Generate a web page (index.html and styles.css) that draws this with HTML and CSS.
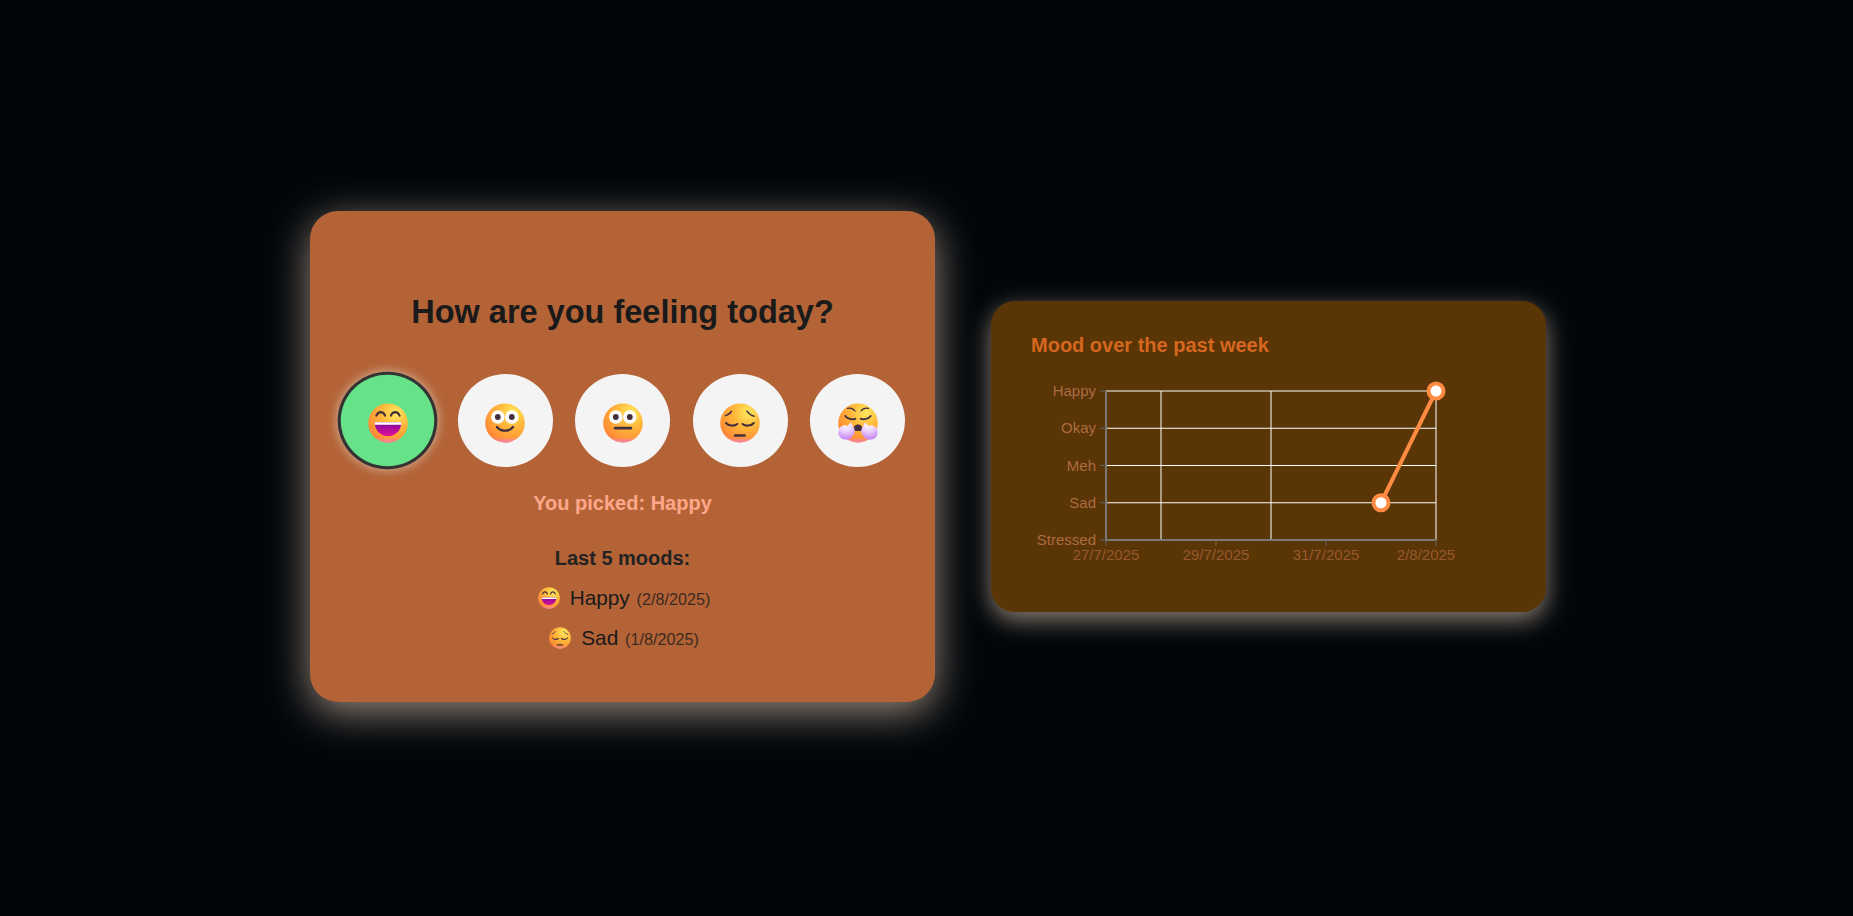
FILE: index.html
```html
<!DOCTYPE html>
<html lang="en">
<head>
<meta charset="utf-8">
<title>Mood tracker</title>
<link rel="stylesheet" href="styles.css">
</head>
<body>
<svg class="sprite" aria-hidden="true">
  <defs>
    <radialGradient id="faceBase" cx="0.7" cy="0.24" r="0.85">
      <stop offset="0" stop-color="#ffe95e"/>
      <stop offset="0.42" stop-color="#ffb93c"/>
      <stop offset="0.82" stop-color="#ff9434"/>
      <stop offset="1" stop-color="#f97e3a"/>
    </radialGradient>
    <linearGradient id="facePink" x1="0" y1="0" x2="0" y2="1">
      <stop offset="0.86" stop-color="#f98bb0" stop-opacity="0"/>
      <stop offset="1" stop-color="#f47fb4" stop-opacity="1"/>
    </linearGradient>
    <linearGradient id="mouthFill" x1="0" y1="0" x2="0" y2="1">
      <stop offset="0" stop-color="#7f0a9c"/>
      <stop offset="1" stop-color="#e4109a"/>
    </linearGradient>
    <radialGradient id="steamFill" cx="0.45" cy="0.08" r="0.95">
      <stop offset="0" stop-color="#fff"/>
      <stop offset="0.45" stop-color="#ecd2ff"/>
      <stop offset="1" stop-color="#c27cf0"/>
    </radialGradient>
    <symbol id="face" viewBox="0 0 40 40">
      <ellipse cx="20" cy="20" rx="19.8" ry="19.6" fill="url(#faceBase)"/>
      <ellipse cx="20" cy="20" rx="19.8" ry="19.6" fill="url(#facePink)"/>
    </symbol>
    <symbol id="emo-happy" viewBox="0 0 40 40">
      <use href="#face"/>
      <path d="M8.300 12.600c1-2.600 2.700-3.600 4.400-3.600s3.400 1 4.400 3.600M22.800 12.600c1-2.600 2.700-3.600 4.400-3.600s3.400 1 4.400 3.600" fill="none" stroke="#43303f" stroke-width="2.100" stroke-linecap="round"/>
      <path d="M7.400 19.200h25.200c.5 0 .8.400.7.900C32.800 27.800 27.300 33 20 33S7.200 27.800 6.700 20.100c-.1-.5.200-.900.700-.900z" fill="url(#mouthFill)"/>
      <path d="M7.400 19.200h25.200c.5 0 .8.400.7.900l-.2 1.500H6.900l-.2-1.500c-.1-.5.200-.900.700-.900z" fill="#fff"/>
    </symbol>
    <symbol id="emo-okay" viewBox="0 0 40 40">
      <use href="#face"/>
      <circle cx="12.800" cy="14" r="6.700" fill="#fff"/>
      <circle cx="26.800" cy="14" r="6.700" fill="#fff"/>
      <circle cx="12.800" cy="14" r="2.900" fill="#43303f"/>
      <circle cx="26.800" cy="14" r="2.900" fill="#43303f"/>
      <path d="M12 24c2 2.700 5 3.700 8 3.700s6-1 8-3.700" fill="none" stroke="#43303f" stroke-width="2.300" stroke-linecap="round"/>
    </symbol>
    <symbol id="emo-meh" viewBox="0 0 40 40">
      <use href="#face"/>
      <circle cx="12.800" cy="14" r="6.700" fill="#fff"/>
      <circle cx="26.800" cy="14" r="6.700" fill="#fff"/>
      <circle cx="12.800" cy="14" r="2.900" fill="#43303f"/>
      <circle cx="26.800" cy="14" r="2.900" fill="#43303f"/>
      <path d="M12.200 25.200h15.600" fill="none" stroke="#43303f" stroke-width="2.800" stroke-linecap="round"/>
    </symbol>
    <symbol id="emo-sad" viewBox="0 0 40 40">
      <use href="#face"/>
      <path d="M5.500 12.600c2.600-.7 4.800-2.200 6-4.400M34 13.200c-3-.9-5.500-2.600-7-5" fill="none" stroke="#43303f" stroke-width="1.500" stroke-linecap="round"/>
      <path d="M6 20c2.300 2.700 8 3.700 11.300 1M22.500 21c3.300 2.700 9 1.700 11.300-1" fill="none" stroke="#43303f" stroke-width="2.100" stroke-linecap="round"/>
      <path d="M15 32.400h9.600" fill="none" stroke="#43303f" stroke-width="2.500" stroke-linecap="round"/>
    </symbol>
    <symbol id="emo-stressed" viewBox="0 0 40 40">
      <use href="#face"/>
      <path d="M9.500 5.300c3-.7 5.800.2 7.500 2.700M30.500 5.300c-3-.7-5.800.2-7.500 2.700" fill="none" stroke="#43303f" stroke-width="1.300" stroke-linecap="round"/>
      <path d="M7.300 13c2 2.800 6.500 3.800 10 2.800M32.700 13c-2 2.800-6.500 3.800-10 2.800" fill="none" stroke="#43303f" stroke-width="1.900" stroke-linecap="round"/>
      <path d="M15 28c0-4.400 2.300-6.500 5-6.500s5 2.100 5 6.500z" fill="#43303f"/>
      <path d="M4 23c2-1.200 4-1 5.500.2C10.500 21.500 12 20 13 19.500l3.500 6.500c.8 2.300.2 4.800-1.800 7-1.700 2.600-5 4.300-8 3.600-3.500-.4-6-3-6.300-6.500C.1 27.200 1.500 24.500 4 23z" fill="url(#steamFill)"/>
      <path d="M36 23c-2-1.200-4-1-5.500.2-1-1.700-2.500-3.200-3.500-3.700l-3.500 6.500c-.8 2.300-.2 4.800 1.800 7 1.700 2.600 5 4.300 8 3.600 3.500-.4 6-3 6.300-6.500.3-2.900-1.100-5.600-3.600-7.100z" fill="url(#steamFill)"/>
    </symbol>
  </defs>
</svg>

<main class="page">
  <section class="card mood-card">
    <h1 class="mood-title">How are you feeling today?</h1>
    <div class="mood-row">
      <button class="mood-btn is-selected" type="button" aria-label="Happy"><svg class="mood-emoji"><use href="#emo-happy"/></svg></button>
      <button class="mood-btn" type="button" aria-label="Okay"><svg class="mood-emoji"><use href="#emo-okay"/></svg></button>
      <button class="mood-btn" type="button" aria-label="Meh"><svg class="mood-emoji"><use href="#emo-meh"/></svg></button>
      <button class="mood-btn" type="button" aria-label="Sad"><svg class="mood-emoji"><use href="#emo-sad"/></svg></button>
      <button class="mood-btn" type="button" aria-label="Stressed"><svg class="mood-emoji"><use href="#emo-stressed"/></svg></button>
    </div>
    <p class="picked">You picked: Happy</p>
    <h2 class="history-title">Last 5 moods:</h2>
    <ul class="history">
      <li class="history-item"><svg class="history-emoji"><use href="#emo-happy"/></svg><span class="history-text">Happy <small class="history-date">(2/8/2025)</small></span></li>
      <li class="history-item"><svg class="history-emoji"><use href="#emo-sad"/></svg><span class="history-text">Sad <small class="history-date">(1/8/2025)</small></span></li>
    </ul>
  </section>

  <section class="card chart-card">
    <h2 class="chart-title">Mood over the past week</h2>
    <svg class="chart" viewBox="0 0 475 199" role="img" aria-label="Mood line chart">
      <g class="grid">
        <line x1="75" y1="18" x2="405" y2="18"/>
        <line x1="75" y1="55.250" x2="405" y2="55.250"/>
        <line x1="75" y1="92.500" x2="405" y2="92.500"/>
        <line x1="75" y1="129.750" x2="405" y2="129.750"/>
        <line x1="130" y1="18" x2="130" y2="167"/>
        <line x1="240" y1="18" x2="240" y2="167"/>
        <line x1="405" y1="18" x2="405" y2="167"/>
      </g>
      <g class="axis">
        <line class="axis-main" x1="75" y1="18" x2="75" y2="168"/>
        <line class="axis-main" x1="74" y1="167" x2="405" y2="167"/>
        <line x1="69" y1="18" x2="75" y2="18"/>
        <line x1="69" y1="55.250" x2="75" y2="55.250"/>
        <line x1="69" y1="92.500" x2="75" y2="92.500"/>
        <line x1="69" y1="129.750" x2="75" y2="129.750"/>
        <line x1="69" y1="167" x2="75" y2="167"/>
        <line x1="75" y1="167" x2="75" y2="173"/>
        <line x1="185" y1="167" x2="185" y2="173"/>
        <line x1="295" y1="167" x2="295" y2="173"/>
        <line x1="405" y1="167" x2="405" y2="173"/>
      </g>
      <g class="y-labels">
        <text x="65" y="23">Happy</text>
        <text x="65" y="60">Okay</text>
        <text x="65" y="97.500">Meh</text>
        <text x="65" y="135">Sad</text>
        <text x="65" y="172">Stressed</text>
      </g>
      <g class="x-labels">
        <text x="75" y="187">27/7/2025</text>
        <text x="185" y="187">29/7/2025</text>
        <text x="295" y="187">31/7/2025</text>
        <text x="395" y="187">2/8/2025</text>
      </g>
      <line class="series" x1="350" y1="129.750" x2="405" y2="18"/>
      <circle class="dot" cx="350" cy="129.750" r="7.500"/>
      <circle class="dot" cx="405" cy="18" r="7.500"/>
    </svg>
  </section>
</main>
</body>
</html>
```

FILE: styles.css
```css
* { box-sizing: border-box; }

html, body { margin: 0; height: 100%; }

body {
  background: #02060a;
  font-family: "Liberation Sans", Arial, sans-serif;
  color: #1a1a1a;
}

.sprite { width: 0; height: 0; display: block; }

.page {
  min-height: 916px;
  display: flex;
  align-items: center;
  justify-content: center;
  gap: 56px;
  padding: 0 0 3px 3px;
}

.card { flex: none; }

.mood-card {
  width: 625px;
  height: 491px;
  padding: 81px 30px 0;
  background: #b36336;
  border-radius: 28px;
  box-shadow: 0 10px 40px rgba(255, 225, 200, 0.6);
  text-align: center;
}

.mood-title {
  margin: 0 0 42px;
  font-size: 32.500px;
  font-weight: 700;
  line-height: 40px;
  color: #1a1a1a;
}

.mood-row {
  display: flex;
  justify-content: space-between;
}

.mood-btn {
  width: 95px;
  height: 93px;
  padding: 5px 0 0;
  border: 0;
  border-radius: 50%;
  background: #f4f4f4;
  display: flex;
  align-items: center;
  justify-content: center;
}

.mood-btn.is-selected {
  background: #66e389;
  border: 3px solid #333;
  transform: scale(1.05);
  box-shadow: 0 0 10px rgba(255, 255, 255, 0.55);
}

.mood-btn.is-selected .mood-emoji { transform: scale(0.952); }

.mood-emoji { width: 40px; height: 40px; display: block; }

.picked {
  margin: 24px 0 0;
  font-size: 20px;
  font-weight: 700;
  line-height: 24px;
  color: #ffa78a;
}

.history-title {
  margin: 31px 0 0;
  font-size: 20px;
  font-weight: 700;
  line-height: 24px;
  color: #222;
}

.history {
  margin: 8px 0 0;
  padding: 0;
  list-style: none;
}

.history-item {
  height: 40px;
  padding-left: 3px;
  display: flex;
  align-items: center;
  justify-content: center;
  font-size: 20.800px;
  color: #1a1a1a;
}

.history-emoji { width: 22px; height: 22px; display: block; margin-right: 10px; }

.history-date {
  margin-left: 1px;
  font-size: 16.200px;
  color: #3c2a20;
}

.chart-card {
  width: 555px;
  height: 311px;
  padding: 33px 40px 40px;
  background: #5a3505;
  border-radius: 24px;
  box-shadow: 0 8px 24px rgba(255, 225, 200, 0.55);
}

.chart-title {
  margin: 0 0 16px;
  font-size: 20px;
  font-weight: 700;
  line-height: 23px;
  color: #d6671f;
}

.chart { display: block; width: 475px; height: 199px; }

.grid line { stroke: #fff; stroke-width: 1; }

.axis line { stroke: #666; stroke-width: 1; }

.axis .axis-main { stroke: #7a7a74; stroke-width: 2; }

.y-labels text, .x-labels text { font-size: 15px; font-family: "Liberation Sans", Arial, sans-serif; }

.y-labels text { text-anchor: end; fill: #ad6b42; }

.x-labels text { text-anchor: middle; fill: #98592f; }

.series { stroke: #ff8c42; stroke-width: 4; }

.dot { fill: #fff; stroke: #ff8c42; stroke-width: 4; }
```
